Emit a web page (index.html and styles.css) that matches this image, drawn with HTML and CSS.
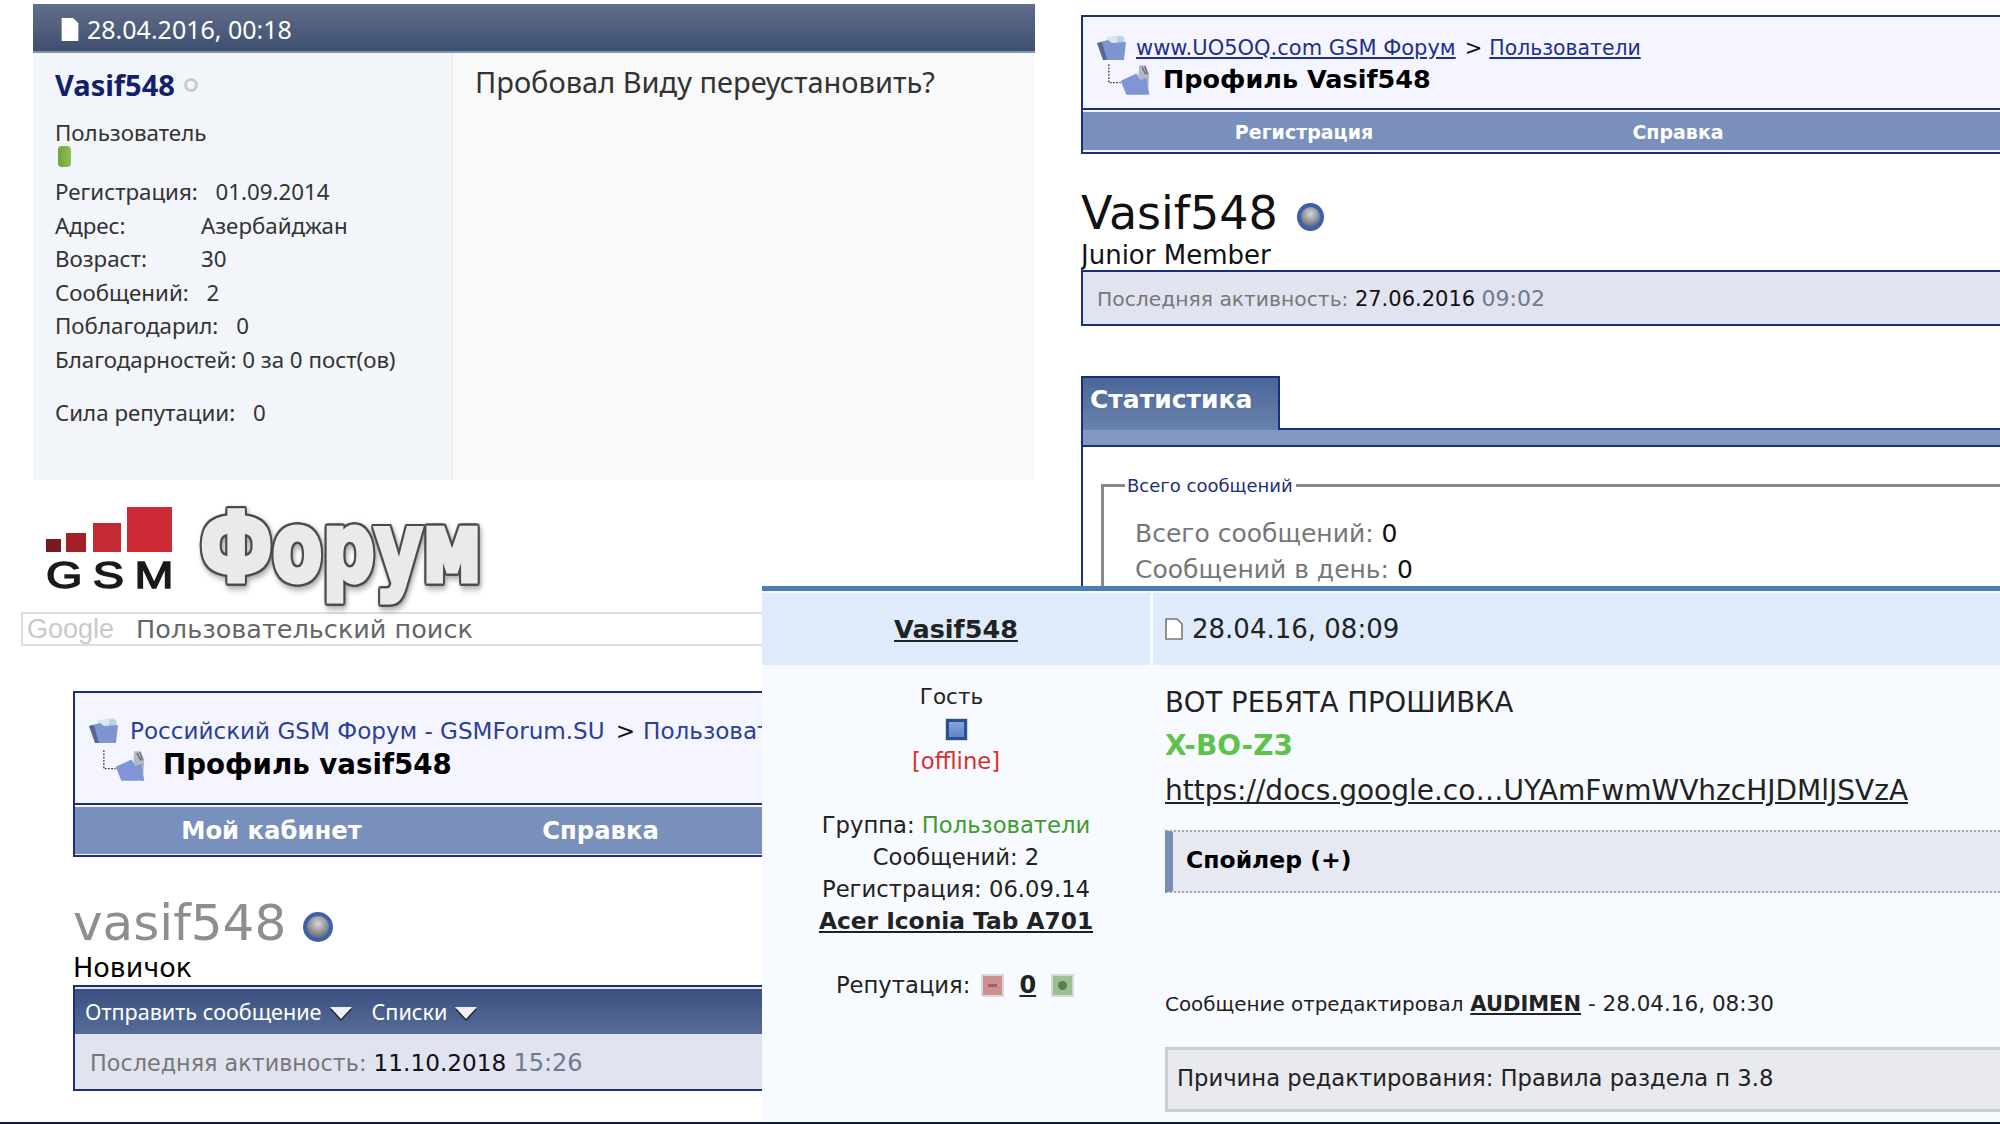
FILE: index.html
```html
<!DOCTYPE html>
<html lang="en">
<head>
    <meta charset="UTF-8">
    <meta name="viewport" content="width=device-width, initial-scale=1.0">
    <title>Vasif548</title>
    <link rel="stylesheet" href="styles.css">
</head>
<body>
    <svg class="defs" width="0" height="0">
        <symbol id="folder" viewBox="0 0 30 26">
            <path d="M9 2l16-2 3 3-1 10H10z" fill="#dde5ee"/>
            <path d="M20 1l7 1v8h-7z" fill="#b9d2e6"/>
            <path d="M0 8l11-3 4 3 14-1-2 18H8z" fill="#7f95cf"/>
            <path d="M0 8l6 17h4L5 7z" fill="#56688f"/>
        </symbol>
        <symbol id="subfolder" viewBox="0 0 50 34">
            <path d="M2 1v20h13" fill="none" stroke="#444" stroke-width="1.5" stroke-dasharray="2 1.5"/>
            <path d="M35 2l7 0 4 9-1 15H33z" fill="#b4bac4"/>
            <path d="M38 4l4 8M41 3l3 9" stroke="#667" stroke-width="1.4" fill="none"/>
            <path d="M15 19l17-8 4 7 7-2 3 18H21z" fill="#7f95d6"/>
        </symbol>
        <symbol id="doc" viewBox="0 0 18 22">
            <path d="M1 1h11l5 5v15H1z" fill="#fff" stroke="#777" stroke-width="1.6"/>
        </symbol>
    </svg>

    <!-- верхний левый пост -->
    <section class="piece post-old">
        <div class="post-old-head">
            <svg class="head-doc" viewBox="0 0 18 22"><path d="M1 0h11l5 5v17H1z" fill="#fff"/></svg>
            <span>28.04.2016, 00:18</span>
        </div>
        <div class="post-old-body">
            <div class="post-old-side">
                <div class="post-old-name">Vasif548 <span class="dot-off"></span></div>
                <div class="post-old-rank">Пользователь</div>
                <div class="rank-bar"></div>
                <div class="stat-row">Регистрация: <span class="stat-val">01.09.2014</span></div>
                <div class="stat-row"><span class="stat-label">Адрес:</span>Азербайджан</div>
                <div class="stat-row"><span class="stat-label">Возраст:</span>30</div>
                <div class="stat-row">Сообщений: <span class="stat-val">2</span></div>
                <div class="stat-row">Поблагодарил: <span class="stat-val">0</span></div>
                <div class="stat-row">Благодарностей: 0 за 0 пост(ов)</div>
                <div class="stat-row stat-gap">Сила репутации: <span class="stat-val">0</span></div>
            </div>
            <div class="post-old-text">Пробовал Виду переустановить?</div>
        </div>
    </section>

    <!-- верхний правый профиль -->
    <section class="piece profile-uo">
        <div class="crumb-box">
            <div class="crumbs">
                <div class="crumb-line">
                    <svg class="ico-folder"><use href="#folder"/></svg>
                    <a href="#" class="crumb-link">www.UO5OQ.com GSM Форум</a> <span class="crumb-sep">&gt;</span> <a href="#" class="crumb-link crumb-last">Пользователи</a>
                </div>
                <div class="crumb-title">
                    <svg class="ico-sub"><use href="#subfolder"/></svg>
                    Профиль Vasif548
                </div>
            </div>
            <nav class="crumb-nav">
                <span>Регистрация</span>
                <span>Справка</span>
            </nav>
        </div>
        <div class="profile-name">Vasif548 <span class="orb"></span></div>
        <div class="profile-rank">Junior Member</div>
        <div class="activity">Последняя активность: <b>27.06.2016</b> <i>09:02</i></div>
        <div class="tab">Статистика</div>
        <div class="tab-strip"></div>
        <div class="tab-body">
            <div class="stats-set">
                <div class="stats-legend">Всего сообщений</div>
                <div class="stats-row">Всего сообщений: <b>0</b></div>
                <div class="stats-row">Сообщений в день: <b>0</b></div>
            </div>
        </div>
    </section>

    <!-- логотип и поиск -->
    <section class="piece logo-block">
        <div class="logo">
            <div class="logo-mark">
                <div class="bars">
                    <span class="bar bar-1"></span>
                    <span class="bar bar-2"></span>
                    <span class="bar bar-3"></span>
                    <span class="bar bar-4"></span>
                </div>
                <div class="logo-gsm">GSM</div>
            </div>
            <div class="logo-word">Форум</div>
        </div>
        <div class="search">
            <span class="search-google">Google</span>
            <span class="search-hint">Пользовательский поиск</span>
        </div>
    </section>

    <!-- нижний левый профиль -->
    <section class="piece profile-ru">
        <div class="crumb-box crumb-box-ru">
            <div class="crumbs">
                <div class="crumb-line">
                    <svg class="ico-folder"><use href="#folder"/></svg>
                    <a href="#" class="crumb-plain">Российский GSM Форум - GSMForum.SU</a> <span class="crumb-sep">&gt;</span> <a href="#" class="crumb-plain crumb-last">Пользователи</a>
                </div>
                <div class="crumb-title">
                    <svg class="ico-sub"><use href="#subfolder"/></svg>
                    Профиль vasif548
                </div>
            </div>
            <nav class="crumb-nav">
                <span>Мой кабинет</span>
                <span>Справка</span>
            </nav>
        </div>
        <div class="profile-name">vasif548 <span class="orb"></span></div>
        <div class="profile-rank">Новичок</div>
        <div class="activity-box">
            <div class="activity-bar">
                <span>Отправить сообщение</span><span class="tri"></span>
                <span class="activity-gap">Списки</span><span class="tri"></span>
            </div>
            <div class="activity-line">Последняя активность: <b>11.10.2018</b> <i>15:26</i></div>
        </div>
    </section>

    <div class="piece bottom-line"></div>

    <!-- пост поверх всего -->
    <section class="piece post-new">
        <div class="post-new-top"></div>
        <div class="post-new-head">
            <div class="post-new-user"><a href="#">Vasif548</a></div>
            <div class="post-new-date">
                <svg class="ico-doc"><use href="#doc"/></svg>
                28.04.16, 08:09
            </div>
        </div>
        <div class="post-new-body">
            <div class="post-new-side">
                <div class="guest">Гость</div>
                <div class="status-ico"></div>
                <div class="offline">[offline]</div>
                <div class="side-gap">Группа: <span class="group">Пользователи</span></div>
                <div>Сообщений: 2</div>
                <div>Регистрация: 06.09.14</div>
                <div><a href="#" class="device">Acer Iconia Tab A701</a></div>
                <div class="rep">
                    Репутация:
                    <span class="rep-btn rep-minus"><span class="rep-mark"></span></span>
                    <a href="#" class="rep-num">0</a>
                    <span class="rep-btn rep-plus"><span class="rep-mark rep-mark-plus"></span></span>
                </div>
            </div>
            <div class="post-new-main">
                <div class="msg-line">ВОТ РЕБЯТА ПРОШИВКА</div>
                <div class="msg-line msg-green">X-BO-Z3</div>
                <div class="msg-line"><a href="#" class="msg-link">https://docs.google.co…UYAmFwmWVhzcHJDMlJSVzA</a></div>
                <div class="spoiler">Спойлер (+)</div>
                <div class="edited"><span class="edited-label">Сообщение отредактировал</span> <a href="#">AUDIMEN</a> - 28.04.16, 08:30</div>
                <div class="reason">Причина редактирования: Правила раздела п 3.8</div>
            </div>
        </div>
    </section>
</body>
</html>
```

FILE: styles.css
```css
body {
    margin: 0;
    background-color: #fff;
    color: #222;
    font-family: "DejaVu Sans", sans-serif;
    height: 1124px;
    overflow: hidden;
    position: relative;
}
a {
    color: inherit;
}
.defs {
    position: absolute;
}
/* куски коллажа */
.piece {
    position: absolute;
    box-sizing: border-box;
    overflow: hidden;
}

/* верхний левый пост */
.post-old {
    left: 33px;
    top: 4px;
    width: 1002px;
    height: 476px;
    font-family: "Noto Sans", sans-serif;
    color: #333;
}
.post-old-head {
    height: 49px;
    box-sizing: border-box;
    background: linear-gradient(#626e8b, #3e4f6f);
    border-bottom: 2px solid #7d94ae;
    color: #fff;
    font-size: 25px;
    display: flex;
    align-items: center;
    padding: 3px 0 0 27px;
    gap: 7px;
}
.head-doc {
    width: 20px;
    height: 23px;
}
.post-old-body {
    display: flex;
    height: 427px;
}
.post-old-side {
    width: 420px;
    box-sizing: border-box;
    background-color: #f2f5f9;
    border-right: 1px solid #e6e9ee;
    padding: 12px 0 0 22px;
    font-size: 22.3px;
}
.post-old-name {
    font-size: 29px;
    font-weight: bold;
    color: #10206a;
    line-height: 40px;
    display: flex;
    align-items: center;
    gap: 9px;
}
.dot-off {
    width: 8px;
    height: 8px;
    border: 3px solid #c8ccd0;
    border-radius: 50%;
}
.post-old-rank {
    line-height: 34px;
    margin-top: 11px;
}
.rank-bar {
    width: 13px;
    height: 21px;
    margin: -4px 0 8px 3px;
    border-radius: 4px;
    background: linear-gradient(90deg, #6ea53c, #8cc152);
}
.stat-row {
    line-height: 33.5px;
    white-space: nowrap;
}
.stat-val {
    margin-left: 12px;
}
.stat-label {
    display: inline-block;
    width: 146px;
}
.stat-gap {
    margin-top: 20px;
}
.post-old-text {
    flex: 1;
    background-color: #f9f9f9;
    padding: 9px 0 0 22px;
    font-size: 29px;
    line-height: 40px;
}

/* шапка с хлебными крошками */
.crumb-box {
    box-sizing: border-box;
    border: 2px solid #1c2f7e;
    background-color: #f5f5ff;
}
.crumbs {
    padding: 16px 0 0 14px;
    height: 93px;
    box-sizing: border-box;
    border-bottom: 2px solid #1c2f7e;
    white-space: nowrap;
}
.crumb-line {
    display: flex;
    align-items: center;
    gap: 9px;
    font-size: 21px;
    line-height: 30px;
    color: #111;
}
.crumb-link {
    color: #1f2f8f;
}
.crumb-plain {
    color: #2a3f9a;
    text-decoration: none;
}
.crumb-last {
    margin-left: -2px;
    font-size: 20.4px;
}
.crumb-title {
    display: flex;
    align-items: center;
    gap: 10px;
    font-size: 25.5px;
    font-weight: bold;
    color: #000;
    line-height: 32px;
    padding-left: 10px;
}
.ico-folder {
    width: 30px;
    height: 26px;
    flex-shrink: 0;
}
.ico-sub {
    width: 46px;
    height: 32px;
    flex-shrink: 0;
}
.crumb-nav {
    display: grid;
    grid-template-columns: 374px 374px;
    box-sizing: border-box;
    padding: 2px 0 0 34px;
    margin-top: 2px;
    height: 38px;
    align-items: center;
    background-color: #7a90bc;
    color: #fff;
    font-weight: bold;
    font-size: 19px;
    text-align: center;
}
.profile-name {
    font-size: 46px;
    line-height: 56px;
    color: #111;
    display: flex;
    align-items: center;
    gap: 19px;
}
.orb {
    width: 27px;
    height: 28px;
    margin-top: 8px;
    border-radius: 50%;
    box-sizing: border-box;
    border: 4px solid #3f5fa8;
    background: radial-gradient(circle at 50% 35%, #d8d8da, #5c606b 85%);
}
.profile-rank {
    font-size: 26px;
    line-height: 29px;
    color: #111;
}

/* профиль сверху справа */
.profile-uo {
    left: 1081px;
    top: 15px;
    width: 919px;
    height: 575px;
}
.profile-uo .crumb-box {
    height: 139px;
    border-right: 0;
}
.profile-uo .profile-name {
    margin-top: 31px;
}
.activity {
    height: 56px;
    box-sizing: border-box;
    border: 2px solid #1c2f7e;
    border-right: 0;
    background-color: #e1e4f0;
    padding-left: 14px;
    font-size: 20.3px;
    line-height: 54px;
    color: #777;
}
.activity b,
.activity-line b {
    font-weight: normal;
    color: #111;
    font-size: 21px;
}
.activity i,
.activity-line i {
    font-style: normal;
    color: #6e7a8e;
    font-size: 22px;
}
.tab {
    margin-top: 50px;
    width: 199px;
    height: 54px;
    box-sizing: border-box;
    border: 2px solid #1c2f7e;
    border-bottom: 0;
    padding-left: 7px;
    background: linear-gradient(#4a6599, #6a82ad);
    color: #fff;
    font-weight: bold;
    font-size: 25px;
    line-height: 44px;
    position: relative;
    z-index: 1;
}
.tab-strip {
    height: 19px;
    box-sizing: border-box;
    border-top: 2px solid #1c2f7e;
    border-left: 2px solid #1c2f7e;
    border-bottom: 2px solid #1c2f7e;
    margin-top: -2px;
    background-color: #8298c0;
}
.tab-body {
    height: 200px;
    border-left: 2px solid #1c2f7e;
    padding: 37px 0 0 18px;
}
.stats-set {
    border: 3px solid #888;
    border-right: 0;
    border-bottom: 0;
    padding: 0 0 0 31px;
    height: 200px;
}
.stats-legend {
    margin: -14px 0 0 -10px;
    background-color: #fff;
    color: #1c2f7e;
    font-size: 18px;
    line-height: 26px;
    width: fit-content;
    padding: 0 3px 0 2px;
    white-space: nowrap;
}
.stats-row {
    font-size: 25px;
    line-height: 36px;
    color: #777;
}
.stats-legend + .stats-row {
    margin-top: 17px;
}
.stats-row b {
    font-weight: normal;
    color: #111;
}

/* логотип */
.logo-block {
    left: 21px;
    top: 500px;
    width: 750px;
    height: 150px;
    overflow: visible;
}
.logo {
    display: flex;
    height: 112px;
}
.logo-mark {
    width: 176px;
    padding: 7px 0 0 25px;
    box-sizing: border-box;
}
.bars {
    display: flex;
    align-items: flex-end;
    gap: 5px;
    height: 45px;
}
.bar {
    display: block;
}
.bar-1 {
    width: 15px;
    height: 13px;
    background-color: #7a1a1e;
}
.bar-2 {
    width: 20px;
    height: 19px;
    background-color: #a42026;
}
.bar-3 {
    width: 28px;
    height: 29px;
    margin-left: 2px;
    background-color: #c42a33;
}
.bar-4 {
    width: 45px;
    height: 45px;
    margin-left: 1px;
    background-color: #cd2b36;
}
.logo-gsm {
    font-family: "Liberation Sans", sans-serif;
    font-size: 36px;
    line-height: 30px;
    margin-top: 9px;
    letter-spacing: 8px;
    width: 100px;
    transform: scaleX(1.3);
    transform-origin: left;
    color: #1a1a1a;
    -webkit-text-stroke: 1.4px #1a1a1a;
}
/* жирные буквы: светлый контур, тёмная обводка фильтрами */
.logo-word {
    font-family: "DejaVu Sans", sans-serif;
    font-weight: bold;
    font-size: 96px;
    line-height: 96px;
    margin-left: 3px;
    height: 96px;
    color: #e9eaea;
    -webkit-text-stroke: 5px #e9eaea;
    filter: drop-shadow(2px 0 0 #4a4a4a) drop-shadow(-2px 0 0 #4a4a4a) drop-shadow(0 2px 0 #4a4a4a) drop-shadow(0 -2px 0 #4a4a4a) drop-shadow(2px 3px 3px rgba(0, 0, 0, 0.35));
    transform: scaleX(0.76);
    transform-origin: left;
    white-space: nowrap;
}
.search {
    height: 34px;
    box-sizing: border-box;
    border: 2px solid #ddd;
    display: flex;
    align-items: center;
    gap: 22px;
    padding-left: 4px;
    white-space: nowrap;
}
.search-google {
    font-family: "Liberation Sans", sans-serif;
    font-size: 27px;
    color: #c9c9c9;
}
.search-hint {
    font-size: 25.5px;
    color: #666;
}

/* профиль снизу слева */
.profile-ru {
    left: 73px;
    top: 691px;
    width: 700px;
    height: 410px;
}
.crumb-box-ru {
    height: 166px;
    border-right: 0;
}
.crumb-box-ru .crumbs {
    height: 112px;
    padding-top: 23px;
}
.crumb-box-ru .crumb-line {
    font-size: 23.1px;
    gap: 11px;
}
.crumb-box-ru .crumb-last {
    font-size: 23.1px;
    margin-left: -3px;
}
.crumb-box-ru .crumb-title {
    font-size: 27.7px;
    line-height: 38px;
    padding-left: 13px;
    gap: 15px;
}
.crumb-box-ru .crumb-nav {
    height: 47px;
    grid-template-columns: 329px 329px;
    padding: 0 0 0 32px;
    font-size: 24.3px;
}
.profile-ru .profile-name {
    font-size: 50px;
    margin-top: 38px;
    color: #8e8e8e;
    gap: 17px;
}
.profile-ru .orb {
    width: 30px;
    height: 30px;
    margin-top: 8px;
}
.profile-ru .profile-rank {
    font-size: 27px;
    line-height: 34px;
    color: #000;
}
.activity-box {
    border: 2px solid #1c2f7e;
    border-right: 0;
    background-color: #e1e4f0;
}
.activity-bar {
    height: 45px;
    margin-top: 2px;
    padding-left: 10px;
    display: flex;
    align-items: center;
    gap: 8px;
    background: linear-gradient(#3b5080, #556c97);
    color: #fff;
    font-family: "Noto Sans", sans-serif;
    font-size: 21.6px;
}
.activity-gap {
    margin-left: 12px;
}
.tri {
    width: 0;
    height: 0;
    border-left: 11px solid transparent;
    border-right: 11px solid transparent;
    border-top: 12px solid #eef0f4;
    margin-top: 3px;
    filter: drop-shadow(0 2px 0 #222);
}
.activity-line {
    height: 55px;
    padding-left: 15px;
    font-size: 22.3px;
    line-height: 58px;
    color: #777;
    white-space: nowrap;
}
.activity-line b {
    font-size: 23.2px;
}
.activity-line i {
    font-size: 24px;
}
.bottom-line {
    left: 0;
    top: 1122px;
    width: 2000px;
    height: 2px;
    background-color: #0b1a4a;
}

/* пост поверх всего */
.post-new {
    left: 762px;
    top: 586px;
    width: 1238px;
    height: 536px;
    background-color: #f7faff;
}
.post-new-top {
    height: 5px;
    background-color: #4a7fb5;
    border-bottom: 2px solid #f7faff;
}
.post-new-head {
    display: flex;
    height: 72px;
    gap: 3px;
    font-size: 26px;
    line-height: 72px;
}
.post-new-user {
    width: 388px;
    background-color: #dfeafb;
    text-align: center;
    font-weight: bold;
    font-size: 25.5px;
}
.post-new-date {
    flex: 1;
    background-color: #dfeafb;
    padding-left: 12px;
    display: flex;
    align-items: center;
    gap: 9px;
}
.ico-doc {
    width: 18px;
    height: 22px;
}
.post-new-body {
    display: flex;
    gap: 3px;
    margin-top: 2px;
}
.post-new-side {
    width: 388px;
    box-sizing: border-box;
    padding-top: 14px;
    text-align: center;
    font-size: 22.7px;
    line-height: 32px;
}
.guest {
    padding-right: 9px;
    font-size: 21.5px;
}
.status-ico {
    width: 15px;
    height: 15px;
    margin: 6px auto 5px;
    border: 3px solid #2c4f94;
    background: linear-gradient(#86a6da, #5f84c4);
    box-shadow: 0 0 0 1px #cfd6e4;
}
.offline {
    color: #d83030;
}
.side-gap {
    margin-top: 32px;
}
.group {
    color: #3f9a2f;
}
.device {
    font-weight: bold;
    font-size: 23.3px;
}
.rep {
    margin-top: 32px;
    display: flex;
    align-items: center;
    justify-content: center;
    gap: 11px;
    padding-right: 2px;
}
.rep-btn {
    width: 23px;
    height: 23px;
    box-sizing: border-box;
    border: 2px solid #d9d9d9;
    display: flex;
    align-items: center;
    justify-content: center;
}
.rep-minus {
    background-color: #cf8f8f;
}
.rep-plus {
    background-color: #9cc18f;
}
.rep-mark {
    width: 9px;
    height: 3px;
    background-color: #8d6b6b;
}
.rep-mark-plus {
    height: 9px;
    border-radius: 50%;
    background-color: #5e7a5a;
}
.rep-num {
    font-weight: bold;
    font-size: 24px;
    margin: 0 4px;
}
.post-new-main {
    flex: 1;
    padding: 13px 0 0 12px;
}
.msg-line {
    font-size: 27.5px;
    line-height: 44px;
}
.msg-green {
    color: #5fc24a;
    font-weight: bold;
    font-size: 28px;
}
.msg-link {
    white-space: nowrap;
    font-size: 28px;
}
.spoiler {
    margin-top: 17px;
    height: 63px;
    box-sizing: border-box;
    border-left: 8px solid #7a8db5;
    border-top: 2px dotted #aaa;
    border-bottom: 2px dotted #aaa;
    background-color: #e6e9f2;
    padding-left: 13px;
    font-size: 23.5px;
    font-weight: bold;
    line-height: 57px;
    color: #000;
}
.edited {
    margin-top: 93px;
    font-size: 21.5px;
    line-height: 36px;
}
.edited-label {
    font-size: 19.9px;
}
.edited a {
    font-weight: bold;
    font-size: 21px;
}
.reason {
    margin-top: 24px;
    height: 65px;
    box-sizing: border-box;
    border: 3px solid #ccc;
    border-right: 0;
    background-color: #e8eaef;
    padding-left: 9px;
    font-size: 22.7px;
    line-height: 57px;
}
```
